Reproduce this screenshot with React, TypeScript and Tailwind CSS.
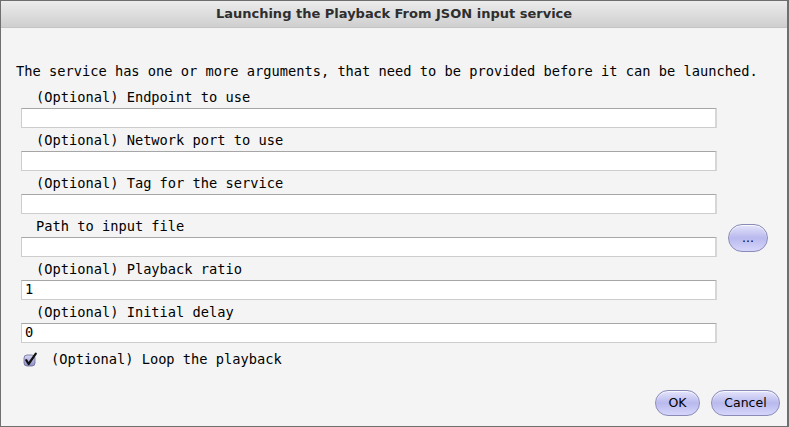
const mono = { fontFamily: '"DejaVu Sans Mono", "Liberation Mono", monospace' };

const fields = [
    { label: '(Optional) Endpoint to use', value: '' },
    { label: '(Optional) Network port to use', value: '' },
    { label: '(Optional) Tag for the service', value: '' },
    { label: 'Path to input file', value: '', browse: true },
    { label: '(Optional) Playback ratio', value: '1' },
    { label: '(Optional) Initial delay', value: '0' },
];

const AquaButton = ({ children, className = '' }: { children: React.ReactNode; className?: string }) => (
    <button
        className={`rounded-full border border-[#8a8ab8] bg-gradient-to-b from-[#e4e4fb] via-[#b9b9ee] to-[#d6d6fb] shadow-[inset_0_1px_1px_rgba(255,255,255,0.8)] text-[12.5px] text-black font-['DejaVu_Sans',sans-serif] ${className}`}
    >
        {children}
    </button>
);

const CheckMark = () => (
    <svg width="15" height="15" viewBox="0 0 15 15">
        <defs>
            <linearGradient id="cb" x1="0" y1="0" x2="0" y2="1">
                <stop offset="0" stopColor="#d9d9f6" />
                <stop offset="1" stopColor="#8d8dc6" />
            </linearGradient>
        </defs>
        <rect x="1" y="3" width="11" height="11" rx="3" fill="url(#cb)" stroke="#6b6b95" strokeWidth="0.8" />
        <path d="M3.2 8.2 L5.6 12 L12.8 1.6" fill="none" stroke="#111" strokeWidth="2.2" strokeLinecap="round" strokeLinejoin="round" />
    </svg>
);

export default function App() {
    return (
        <div className="w-[789px] h-[427px] flex flex-col border border-[#6f6f6f] border-r-2 bg-[#f4f4f4] overflow-hidden">
            {/* Title bar */}
            <div className="h-[27px] shrink-0 flex items-center justify-center bg-gradient-to-b from-[#ececec] to-[#cfcfcf] border-b border-[#c4c4c4]">
                <span className="text-[13px] font-bold text-[#2e2e2e] font-['DejaVu_Sans',sans-serif]">
                    Launching the Playback From JSON input service
                </span>
            </div>

            <div className="flex flex-col pt-[35px] pl-[15px] text-[13.7px] text-black" style={mono}>
                <div className="leading-[17px] whitespace-nowrap">
                    The service has one or more arguments, that need to be provided before it can be launched.
                </div>

                <div className="flex flex-col gap-[4px] mt-[9px]">
                    {fields.map((f) => (
                        <div key={f.label} className="flex">
                            <div className="flex flex-col">
                                <div className="leading-[17px] pl-[20px] mb-[2px] whitespace-nowrap">{f.label}</div>
                                <div className="ml-[5px] w-[696px] h-[20px] bg-white border border-[#cdcdcd] border-t-[#a6a6a6] border-r-2 border-r-[#d6d6d6] flex items-center pl-[3px] leading-none">
                                    {f.value}
                                </div>
                            </div>
                            {f.browse && (
                                <AquaButton className="w-[40px] h-[28px] mt-[6px] ml-[11px] flex items-center justify-center text-[10px] text-[#1a2a6a]">
                                    ...
                                </AquaButton>
                            )}
                        </div>
                    ))}
                </div>

                <div className="flex items-center mt-[8px] ml-[7px] leading-[17px] gap-[13px]">
                    <CheckMark />
                    <span>(Optional) Loop the playback</span>
                </div>
            </div>

            <div className="mt-auto flex justify-end gap-[11px] pr-[7px] pb-[10px]">
                <AquaButton className="w-[45px] h-[26px]">OK</AquaButton>
                <AquaButton className="w-[69px] h-[26px]">Cancel</AquaButton>
            </div>
        </div>
    );
}
